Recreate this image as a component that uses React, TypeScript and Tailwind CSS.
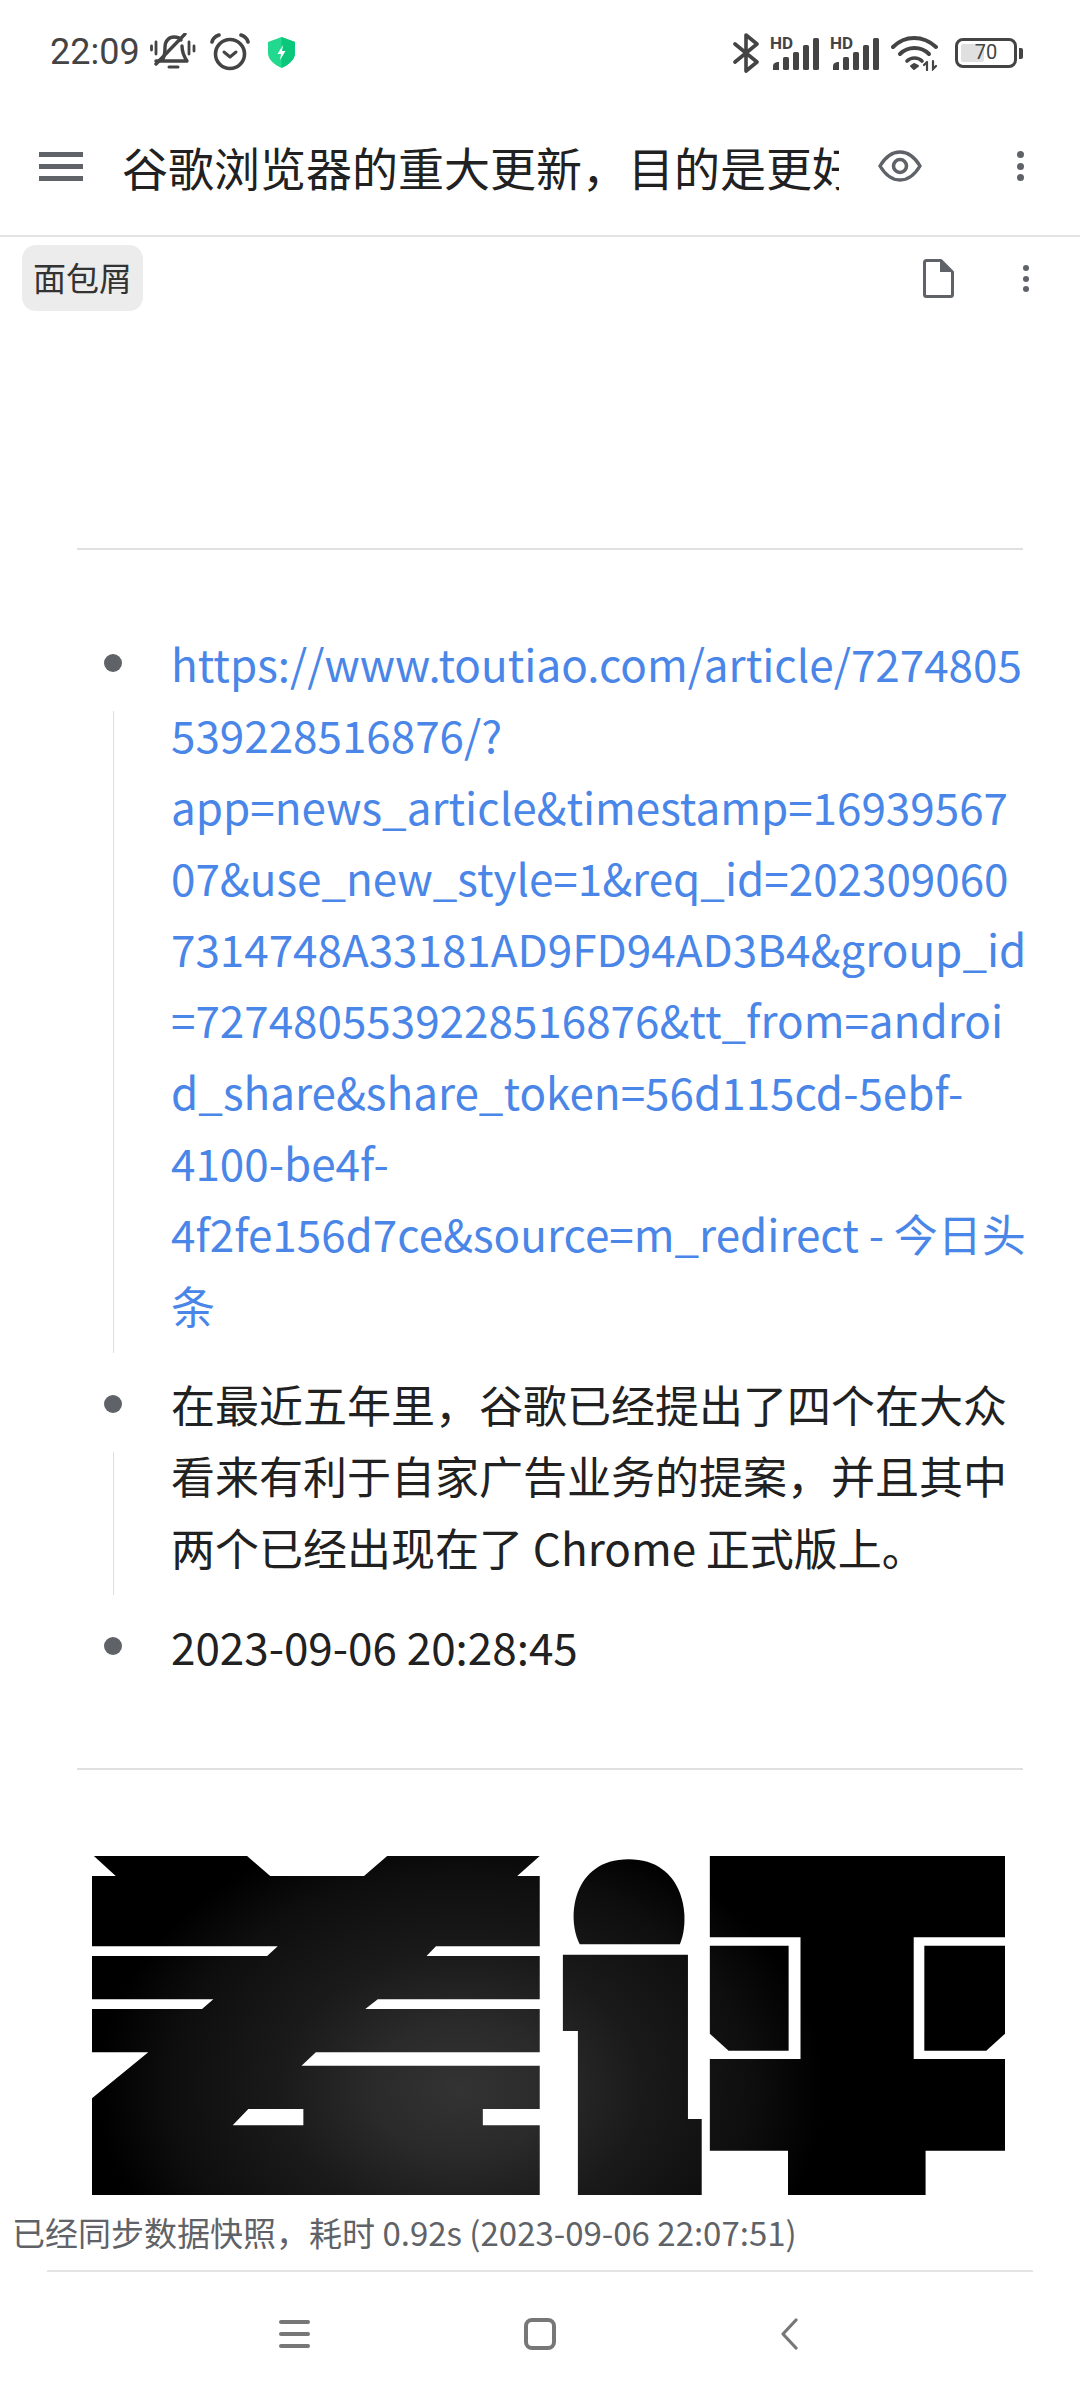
const cjk = { fontFamily: '"Noto Sans CJK SC", "Noto Sans", sans-serif' };

const MoreDots = ({ className }: { className: string }) => (
  <div className={`flex flex-col justify-between ${className}`}>
    <span className="h-[7px] w-[7px] rounded-full bg-[#5f6368]" />
    <span className="h-[7px] w-[7px] rounded-full bg-[#5f6368]" />
    <span className="h-[7px] w-[7px] rounded-full bg-[#5f6368]" />
  </div>
);

const BellOff = () => (
  <svg width="46" height="38" viewBox="0 0 46 38" fill="none" stroke="#444" strokeWidth="3.4" strokeLinecap="round" strokeLinejoin="round">
    <path d="M13 26 C15 22 15 18 15 14 C15 8 19 4 24 4 C27 4 30 5 31 7 M32 13 C32 18 33 22 37 28 L6 28" />
    <path d="M35 1 L6 31" />
    <path d="M19 34 L28 34" strokeWidth="3" />
    <path d="M1.5 13 L1.5 17 M6 9 L6 21 M39 9 L39 21 M44 13 L44 18" strokeWidth="2.8" />
  </svg>
);

const Alarm = () => (
  <svg width="40" height="38" viewBox="0 0 40 38" fill="none" stroke="#444" strokeWidth="3.6" strokeLinecap="round" strokeLinejoin="round">
    <circle cx="20" cy="21" r="14.5" />
    <path d="M14 19 L20 24 L26 19" strokeWidth="3" />
    <path d="M2 9 C3 5 6 3 9 2 M38 9 C37 5 34 3 31 2" />
  </svg>
);

const Shield = () => (
  <svg width="29" height="31" viewBox="0 0 29 31">
    <path d="M14.5 0 L28 5 L28 16 C28 23 21 28 14.5 31 C8 28 1 23 1 16 L1 5 Z" fill="#22d98f" />
    <path d="M14.5 0 L28 5 L28 16 C28 23 21 28 14.5 31 Z" fill="#0bc77c" />
    <path d="M16 8 L10.5 17 L14 17 L13 23 L18.5 14 L15 14 Z" fill="#fff" />
  </svg>
);

const Bluetooth = () => (
  <svg width="27" height="40" viewBox="0 0 27 40" fill="none" stroke="#444" strokeWidth="3.6" strokeLinejoin="round" strokeLinecap="round">
    <path d="M2 11 L24 29 L13 38 L13 2 L24 11 L2 29" />
  </svg>
);

const Signal = () => (
  <div className="relative h-[33px] w-[50px]">
    <span className="absolute left-0 top-[-3px] text-[17px] font-bold leading-[18px] text-[#444]" style={{ fontFamily: 'Roboto, sans-serif' }}>HD</span>
    <svg className="absolute left-0 top-0" width="50" height="33" viewBox="0 0 50 33" fill="#444">
      <path d="M3 33 L3 29 Q3 26 7 25 L9 25 L9 33 Z" />
      <rect x="13" y="20" width="6" height="13" rx="1.5" />
      <rect x="23" y="15" width="6" height="18" rx="1.5" />
      <rect x="33" y="8" width="6" height="25" rx="1.5" />
      <rect x="43" y="1" width="6" height="32" rx="1.5" />
    </svg>
  </div>
);

const Wifi = () => (
  <svg width="48" height="36" viewBox="0 0 48 36" fill="none" stroke="#444" strokeWidth="4" strokeLinecap="round">
    <path d="M2 12 C14 0 32 0 45 12" />
    <path d="M9 19 C17 11 30 11 38 19" />
    <path d="M16 26 C20 22 27 22 31 26" strokeWidth="3.6" />
    <path d="M20 31 L23 34 L27 31 L23 29 Z" fill="#444" strokeWidth="2" strokeLinejoin="round" />
    <path d="M36 27 L36 35 M33 30 L36 27 M42 26 L42 34 L45 31" strokeWidth="2.2" />
  </svg>
);

const Battery = () => (
  <div className="flex items-center gap-[2px]">
    <div className="relative flex h-[30px] w-[62px] items-center rounded-[8px] border-[3.5px] border-[#444] p-[3px]">
      <div className="h-full w-[46%] rounded-[2px] bg-[#e0e0e0]" />
      <span className="absolute inset-0 text-center text-[20px] leading-[23px] text-[#444]" style={{ fontFamily: 'Roboto, sans-serif' }}>70</span>
    </div>
    <span className="h-[11px] w-[4px] rounded-r-[2px] bg-[#444]" />
  </div>
);

const Eye = () => (
  <svg width="44" height="32" viewBox="0 0 44 32" fill="none" stroke="#5f6368" strokeWidth="3.4">
    <path d="M2 16 C8 6 15 2 22 2 C29 2 36 6 42 16 C36 26 29 30 22 30 C15 30 8 26 2 16 Z" />
    <circle cx="22" cy="16" r="6.5" strokeWidth="3.6" />
  </svg>
);

const DocIcon = () => (
  <svg width="31" height="39" viewBox="0 0 31 39">
    <path d="M3.5 1.5 L18 1.5 L29.5 13 L29.5 35.5 Q29.5 37.5 27.5 37.5 L3.5 37.5 Q1.5 37.5 1.5 35.5 L1.5 3.5 Q1.5 1.5 3.5 1.5 Z" fill="none" stroke="#5f6368" strokeWidth="3" strokeLinejoin="round" />
    <path d="M17 1.5 L29.5 13 L17 13 Z" fill="#5f6368" />
  </svg>
);

const Logo = () => (
  <svg className="ml-[15px] block h-[339px] w-[913px]" viewBox="50 103 1460 1017" preserveAspectRatio="none">
    <defs>
      <radialGradient id="glow" gradientUnits="userSpaceOnUse" cx="640" cy="800" r="580" gradientTransform="translate(0 -320) scale(1 1.4)">
        <stop offset="0" stopColor="#333" />
        <stop offset="0.25" stopColor="#2a2a2a" />
        <stop offset="0.5" stopColor="#1a1a1a" />
        <stop offset="0.8" stopColor="#0e0e0e" />
        <stop offset="1" stopColor="#000" />
      </radialGradient>
    </defs>
    <g fill="url(#glow)">
      <path
        fillRule="evenodd"
        d="M53 103 L298 103 L335 163 L485 163 L522 103 L766 103 L730 163 L766 163 L766 374 L600 374 L585 403 L766 403 L766 533 L507 533 L487 562 L766 562 L766 692 L408 692 L385 732 L766 732 L766 862 L675 862 L675 911 L766 911 L766 1120 L50 1120 L50 830 L140 692 L50 692 L50 562 L226 562 L244 533 L50 533 L50 403 L330 403 L347 374 L50 374 L50 163 L88 163 Z M300 862 L388 862 L388 911 L275 911 Z"
      />
      <path d="M830 368 C808 290 818 113 908 113 C998 113 1008 290 990 368 Z" />
      <path d="M803 399 L1003 399 L1003 892 L1025 892 L1025 1120 L827 1120 L827 628 L803 628 Z" />
      <path d="M1038 103 L1510 103 L1510 347 L1364 347 L1364 712 L1510 712 L1510 987 L1383 987 L1383 1120 L1163 1120 L1163 987 L1038 987 L1038 712 L1183 712 L1183 347 L1038 347 Z" />
      <path d="M1038 372 L1164 372 L1164 687 L1068 687 L1038 636 Z" />
      <path d="M1381 372 L1510 372 L1510 636 L1480 687 L1381 687 Z" />
    </g>
  </svg>
);

const ListItem = ({ children, line }: { children: React.ReactNode; line?: boolean }) => (
  <li className="flex">
    <div className="flex w-[94px] shrink-0 flex-col">
      <span className="ml-[27px] mt-[26px] h-[18px] w-[18px] shrink-0 rounded-full bg-[#5f6368]" />
      {line && <span className="-mb-[12px] ml-[36px] mt-[39px] w-[1px] flex-1 bg-[#dedede]" />}
    </div>
    <div className="w-[856px] shrink-0">{children}</div>
  </li>
);

export default function App() {
  return (
    <div className="flex h-[2400px] w-[1080px] flex-col overflow-hidden bg-white" style={cjk}>
      {/* status bar */}
      <div className="flex h-[100px] shrink-0 items-start justify-between pl-[50px] pr-[57px] pt-[33px]">
        <div className="flex items-center">
          <span className="w-[100px] text-[36px] leading-[38px] text-[#444]" style={{ fontFamily: 'Roboto, sans-serif' }}>22:09</span>
          <BellOff />
          <span className="ml-[14px]"><Alarm /></span>
          <span className="ml-[17px]"><Shield /></span>
        </div>
        <div className="flex items-center gap-[10px]">
          <Bluetooth />
          <Signal />
          <Signal />
          <span className="ml-[1px]"><Wifi /></span>
          <span className="ml-[6px]"><Battery /></span>
        </div>
      </div>

      {/* header */}
      <header className="flex h-[137px] shrink-0 items-center border-b-2 border-[#e4e4e4] pb-[3px] pl-[39px]">
        <div className="flex h-[29px] w-[44px] shrink-0 flex-col justify-between">
          <span className="h-[5px] bg-[#5f6368]" />
          <span className="h-[5px] bg-[#5f6368]" />
          <span className="h-[5px] bg-[#5f6368]" />
        </div>
        <h1 className="ml-[39px] w-[717px] shrink-0 overflow-hidden whitespace-nowrap text-[46px] leading-[60px] font-normal text-[#212121]">
          谷歌浏览器的重大更新，目的是更好地卖广告
        </h1>
        <span className="ml-[39px]"><Eye /></span>
        <MoreDots className="ml-[95px] h-[30px]" />
      </header>

      {/* breadcrumb */}
      <div className="flex h-[311px] shrink-0 items-start pl-[22px] pt-[8px]">
        <span className="flex h-[66px] w-[121px] items-center justify-center rounded-[14px] bg-[#ececec] text-[33px] text-[#333]">
          面包屑
        </span>
        <span className="ml-[780px] mt-[14px]"><DocIcon /></span>
        <MoreDots className="ml-[69px] mt-[20px] h-[27px] [&>span]:h-[6px] [&>span]:w-[6px]" />
      </div>

      {/* note body */}
      <main className="min-h-0 flex-1 pl-[77px] pr-[57px]">
        <hr className="border-t-2 border-[#e0e0e0]" />
        <ul className="mt-[78px] flex flex-col gap-[28px] text-[44px] leading-[71.3px] text-[#212121]">
          <ListItem line>
            <a className="break-words text-[#4a86e8]">
              https://www.toutiao.com/article/7274805539228516876/?app=news_article&amp;timestamp=1693956707&amp;use_new_style=1&amp;req_id=2023090607314748A33181AD9FD94AD3B4&amp;group_id=7274805539228516876&amp;tt_from=android_share&amp;share_token=56d115cd-5ebf-4100-be4f-4f2fe156d7ce&amp;source=m_redirect - 今日头条
            </a>
          </ListItem>
          <ListItem line>在最近五年里，谷歌已经提出了四个在大众看来有利于自家广告业务的提案，并且其中两个已经出现在了 Chrome 正式版上。</ListItem>
          <ListItem>2023-09-06 20:28:45</ListItem>
        </ul>
        <hr className="mt-[86px] border-t-2 border-[#e0e0e0]" />
        <div className="mt-[86px]"><Logo /></div>
      </main>

      {/* sync message */}
      <div className="shrink-0 pl-[12px] text-[33px] leading-[44px] text-[#5f6368]">
        已经同步数据快照，耗时 0.92s (2023-09-06 22:07:51)
      </div>

      {/* nav bar */}
      <nav className="mx-[47px] mt-[16px] flex h-[130px] shrink-0 items-start border-t-2 border-[#e4e4e4] pt-[48px]">
        <div className="ml-[232px] flex h-[28px] w-[31px] flex-col justify-between">
          <span className="h-[4px] rounded-full bg-[#777]" />
          <span className="h-[4px] rounded-full bg-[#777]" />
          <span className="h-[4px] rounded-full bg-[#777]" />
        </div>
        <div className="ml-[214px] -mt-[2px] h-[32px] w-[32px] rounded-[8px] border-[4px] border-[#777]" />
        <svg className="ml-[224px] -mt-[2px]" width="18" height="32" viewBox="0 0 18 32" fill="none" stroke="#777" strokeWidth="3.2" strokeLinecap="round" strokeLinejoin="round">
          <path d="M16 2 L3 16 L16 30" />
        </svg>
      </nav>
    </div>
  );
}
